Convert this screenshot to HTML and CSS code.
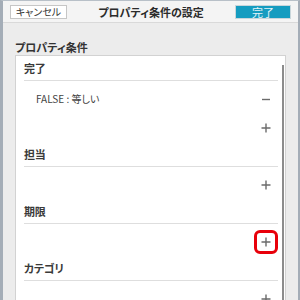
FILE: index.html
```html
<!DOCTYPE html>
<html lang="ja">
<head>
    <meta charset="UTF-8">
    <title>プロパティ条件の設定</title>
    <link rel="stylesheet" href="styles.css">
</head>
<body>
    <div class="window">
        <div class="toolbar">
            <button class="btn btn-cancel">キャンセル</button>
            <div class="title">プロパティ条件の設定</div>
            <button class="btn btn-done">完了</button>
        </div>

        <div class="content">
            <div class="group-label">プロパティ条件</div>

            <div class="panel">
                <div class="sections">
                    <div class="section">
                        <div class="section-title">完了</div>
                        <div class="rows">
                            <div class="row">
                                <span class="cond">FALSE : 等しい</span>
                                <span class="action">
                                    <svg width="10" height="10" viewBox="0 0 10 10"><path d="M1 5.5h8" stroke="#6b6b6b" stroke-width="1.4"/></svg>
                                </span>
                            </div>
                            <div class="row">
                                <span></span>
                                <span class="action">
                                    <svg width="10" height="10" viewBox="0 0 10 10"><path d="M0.5 5h9M5 0.5v9" stroke="#6b6b6b" stroke-width="1.4"/></svg>
                                </span>
                            </div>
                        </div>
                    </div>

                    <div class="section">
                        <div class="section-title">担当</div>
                        <div class="rows">
                            <div class="row">
                                <span></span>
                                <span class="action">
                                    <svg width="10" height="10" viewBox="0 0 10 10"><path d="M0.5 5h9M5 0.5v9" stroke="#6b6b6b" stroke-width="1.4"/></svg>
                                </span>
                            </div>
                        </div>
                    </div>

                    <div class="section">
                        <div class="section-title">期限</div>
                        <div class="rows">
                            <div class="row">
                                <span></span>
                                <span class="action is-marked">
                                    <svg width="10" height="10" viewBox="0 0 10 10"><path d="M0.5 5h9M5 0.5v9" stroke="#6b6b6b" stroke-width="1.4"/></svg>
                                </span>
                            </div>
                        </div>
                    </div>

                    <div class="section">
                        <div class="section-title">カテゴリ</div>
                        <div class="rows">
                            <div class="row">
                                <span></span>
                                <span class="action">
                                    <svg width="10" height="10" viewBox="0 0 10 10"><path d="M0.5 5h9M5 0.5v9" stroke="#6b6b6b" stroke-width="1.4"/></svg>
                                </span>
                            </div>
                        </div>
                    </div>
                </div>

                <div class="scrollbar">
                    <div class="thumb"></div>
                </div>
            </div>
        </div>
    </div>
</body>
</html>
```

FILE: styles.css
```css
* {
    margin: 0;
    padding: 0;
    box-sizing: border-box;
}

body {
    font-family: "Noto Sans CJK JP", "Noto Sans", sans-serif;
    font-feature-settings: "palt";
    width: 300px;
    height: 300px;
    overflow: hidden;
    color: #333;
}

.window {
    height: 300px;
    background: #ececec;
    border-left: 3px solid #a4adb7;
    border-right: 2px solid #a4adb7;
    border-top: 1px solid #b8c0c8;
    overflow: hidden;
}

.toolbar {
    height: 22px;
    display: flex;
    align-items: center;
    padding: 0 7px 0 7px;
    background: #f4f4f4;
    border-bottom: 1px solid #d9d9d9;
}

.btn {
    font-family: inherit;
    font-feature-settings: "palt";
    font-size: 10px;
    line-height: 12px;
    height: 14px;
    border: 1px solid #c6c6c6;
    cursor: pointer;
}

.btn-cancel {
    width: 57px;
    margin-top: 1px;
    background: #fff;
    color: #333;
}

.btn-done {
    width: 56px;
    margin-top: 1px;
    background: #159cc0;
    color: #e3f3f8;
    border-color: #c9d6db;
    font-size: 11px;
}

.title {
    flex: 1;
    text-align: center;
    font-size: 11px;
    font-weight: bold;
    color: #2b2b2b;
}

.content {
    padding: 17px 12px 0 12px;
}

.group-label {
    font-size: 11px;
    line-height: 14px;
    font-weight: bold;
    color: #333;
    margin-bottom: 1px;
}

.panel {
    display: flex;
    background: #fff;
    border: 1px solid #d2d2d2;
    height: 300px;
}

.sections {
    flex: 1;
    padding: 0 4px 0 8px;
}

.section-title {
    height: 25px;
    line-height: 24px;
    font-size: 11px;
    font-weight: bold;
    letter-spacing: -0.3px;
    color: #3a3a3a;
    border-bottom: 1px solid #dedede;
}

.rows {
    padding-top: 3px;
}

.row {
    height: 29px;
    display: flex;
    align-items: center;
    justify-content: space-between;
    padding-left: 12px;
}

.cond {
    font-size: 10px;
    color: #444;
}

.action {
    width: 24px;
    height: 24px;
    display: flex;
    align-items: center;
    justify-content: center;
    border-radius: 6px;
}

.action.is-marked {
    border: 3px solid #e8000a;
}

.scrollbar {
    width: 3px;
    padding-right: 1px;
}

.thumb {
    margin-top: 9px;
    height: 260px;
    background: #8c8c8c;
}
```
